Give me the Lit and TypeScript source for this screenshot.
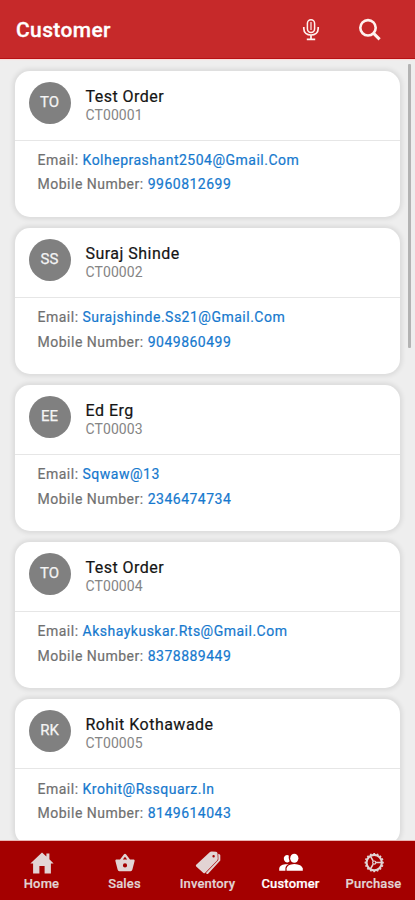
import { LitElement, html, svg, css } from "lit";
import { customElement, property } from "lit/decorators.js";
import { classMap } from "lit/directives/class-map.js";

interface Customer { initials: string; name: string; code: string; email: string; mobile: string; }

const customers: Customer[] = [
  { initials: "TO", name: "Test Order", code: "CT00001", email: "Kolheprashant2504@Gmail.Com", mobile: "9960812699" },
  { initials: "SS", name: "Suraj Shinde", code: "CT00002", email: "Surajshinde.Ss21@Gmail.Com", mobile: "9049860499" },
  { initials: "EE", name: "Ed Erg", code: "CT00003", email: "Sqwaw@13", mobile: "2346474734" },
  { initials: "TO", name: "Test Order", code: "CT00004", email: "Akshaykuskar.Rts@Gmail.Com", mobile: "8378889449" },
  { initials: "RK", name: "Rohit Kothawade", code: "CT00005", email: "Krohit@Rssquarz.In", mobile: "8149614043" },
];

const teeth = Array.from({ length: 16 }, (_, i) => i * 22.5);

const tabs = [
  { label: "Home", icon: svg`<path d="M12 1.4 L16.4 5.4 V2.6 H19.4 V8.2 L23.6 12.4 H20.9 V22.4 H14.6 V15 H9.4 V22.4 H3.1 V12.4 H.4Z"/>` },
  { label: "Sales", icon: svg`<path fill-rule="evenodd" d="M3.2 8.6H7L11 3.2Q12 2.2 13 3.2L17 8.6H20.8Q21.9 8.8 21.6 10L19.4 18.6Q19 20.2 17.6 20.2H6.4Q5 20.2 4.6 18.6L2.4 10Q2.1 8.8 3.2 8.6ZM9.8 8.6H14.2L12 5.7ZM12 12.3a2.1 2.1 0 1 0 0 4.2a2.1 2.1 0 1 0 0-4.2Z"/>` },
  { label: "Inventory", icon: svg`<path fill-rule="evenodd" d="M13.4 1.4Q14.4 .6 15.7 .6L20 .7Q21.3 .9 21.5 2.2L21.8 7.7Q21.8 8.6 21.1 9.4L9 22Q8.2 22.7 7.4 22L.2 15.5Q-.6 14.6 .2 13.8ZM17.6 4a1.2 1.2 0 1 0 0 2.4a1.2 1.2 0 1 0 0-2.4Z"/><path d="M22.2 2.8L23.9 3.6Q24.3 4 24.3 4.6V9.4L12.1 22.8Q11.4 23.3 10.6 22.7L9.9 22L21.8 9.6Q22.4 9 22.4 8Z"/>` },
  { label: "Customer", icon: svg`<ellipse cx="15.3" cy="7.3" rx="4.1" ry="4.5"/><path d="M7.6 19.8V17.6Q8 13.4 15.3 13Q22.8 13.4 23.8 17.6V19.8Z"/><path d="M9.8 4.4Q7.7 3.3 5.8 5Q4.2 6.7 5 9Q6 11.9 8.6 11.4Q10 11 10.6 10.2Q9.2 7.2 9.8 4.4ZM6.4 19.8H.2V17.6Q.4 13.9 6.2 13.3Q8.1 13.1 9.7 13.3Q6.4 14.8 6.4 17.6Z"/>` },
  { label: "Purchase", icon: svg`<g fill="none" stroke="currentColor"><circle cx="12.2" cy="11.6" r="7.7" stroke-width="2.2"/><circle cx="12.2" cy="11.6" r="1.6" stroke-width="1.2"/><path stroke-width="1.5" d="M14 11.6H19.5M11.2 10L8.4 5.2M11.2 13.2L8.4 18"/>${teeth.map(a => svg`<path stroke-width="1.8" d="M12.2 3.4V2" transform="rotate(${a} 12.2 11.6)"/>`)}</g>` },
];

@customElement("customer-card")
class CustomerCard extends LitElement {
  @property({ attribute: false }) customer!: Customer;
  static styles = css`
    :host { display: block; flex: none; box-sizing: border-box; height: 146.6px; background: #fff; border-radius: 15px;
      box-shadow: 0 0 5px 2px rgba(0,0,0,.09); font-family: Roboto, sans-serif; }
    .top { box-sizing: border-box; height: 70.5px; border-bottom: 1.5px solid #e6e6e6; display: flex; padding: 11.1px 13px 0 13.5px; }
    .avatar { width: 42px; height: 42px; border-radius: 50%; background: #808080; color: #f4f4f4;
      font-size: 15px; line-height: 40px; text-align: center; -webkit-text-stroke: .25px; }
    .who { padding: 6px 0 0 15px; }
    .name { font-size: 16px; line-height: 18px; color: #151515; letter-spacing: .48px; -webkit-text-stroke: .2px; }
    .code { font-size: 14px; line-height: 18px; color: #858585; letter-spacing: .08px; }
    .details { padding: 7.2px 22.5px; font-size: 14px; line-height: 24.3px; color: #707070; letter-spacing: .5px; -webkit-text-stroke: .2px; }
    .value { color: #1679ce; }
  `;
  render() {
    const c = this.customer;
    return html`
      <div class="top"><div class="avatar">${c.initials}</div>
        <div class="who"><div class="name">${c.name}</div><div class="code">${c.code}</div></div></div>
      <div class="details"><div>Email: <span class="value">${c.email}</span></div>
        <div>Mobile Number: <span class="value">${c.mobile}</span></div></div>`;
  }
}

@customElement("app-root")
class AppRoot extends LitElement {
  static styles = css`
    :host { display: flex; flex-direction: column; height: 900px; width: 415px; overflow: hidden; font-family: Roboto, sans-serif; background: #eee; }
    header { flex: none; box-sizing: border-box; height: 59px; background: #c6292a; border-bottom: 1px solid #b81114; color: #fff;
      display: flex; align-items: center; padding: 1px 33px 0 16px; box-shadow: 0 1px 1px #f9dcda; z-index: 1; }
    h1 { margin: 0 auto 0 0; font-size: 21px; font-weight: 500; line-height: 26px; letter-spacing: .38px; -webkit-text-stroke: .3px; }
    header svg { display: block; fill: none; stroke: #fff2ef; }
    .mic { width: 18px; height: 24px; margin-right: 38px; }
    .search { width: 24px; height: 24px; }
    main { flex: 1; min-height: 0; overflow: hidden; display: flex; padding: 11.5px 4px 0 15px; }
    .list { width: 385px; display: flex; flex-direction: column; gap: 10.5px; }
    .thumb { width: 3px; height: 284px; margin: -7px 0 0 auto; background: #b3b3b3; border-radius: 1px; }
    nav { flex: none; height: 59px; background: #a40000; box-shadow: 0 -1px 0 #e9b5b3; display: grid; grid-template-columns: repeat(5, 1fr); z-index: 1; }
    .tab { display: flex; flex-direction: column; align-items: center; padding-top: 10px; color: #e2d4d4; font-size: 13px; line-height: 18px; font-weight: 500; letter-spacing: .15px; -webkit-text-stroke: .2px; }
    .tab svg { width: 24px; height: 24px; fill: currentColor; overflow: visible; }
    .active { color: #fff; }
  `;
  render() {
    return html`
      <header><h1>Customer</h1>
        <svg class="mic" viewBox="0 0 18 24"><rect x="5.4" y="1.8" width="7.2" height="12.6" rx="3.6" stroke-width="1.5"/><path stroke-width="1.7" d="M1.8 9V10.5C1.8 14.8 5 17 9 17S16.2 14.8 16.2 10.5V9M9 17V21M4.8 21.3H13.2"/><path stroke-width="1.2" d="M9 4V12"/></svg>
        <svg class="search" viewBox="0 0 24 24"><circle cx="10" cy="9.8" r="7.7" stroke-width="2.6"/><path stroke-width="3" d="M15.6 15.4L21.6 21.4"/></svg>
      </header>
      <main><div class="list">${customers.map(c => html`<customer-card .customer=${c}></customer-card>`)}</div><div class="thumb"></div></main>
      <nav>${tabs.map(t => html`<div class=${classMap({ tab: true, active: t.label === "Customer" })}><svg viewBox="0 0 24 24">${t.icon}</svg><span>${t.label}</span></div>`)}</nav>`;
  }
}
